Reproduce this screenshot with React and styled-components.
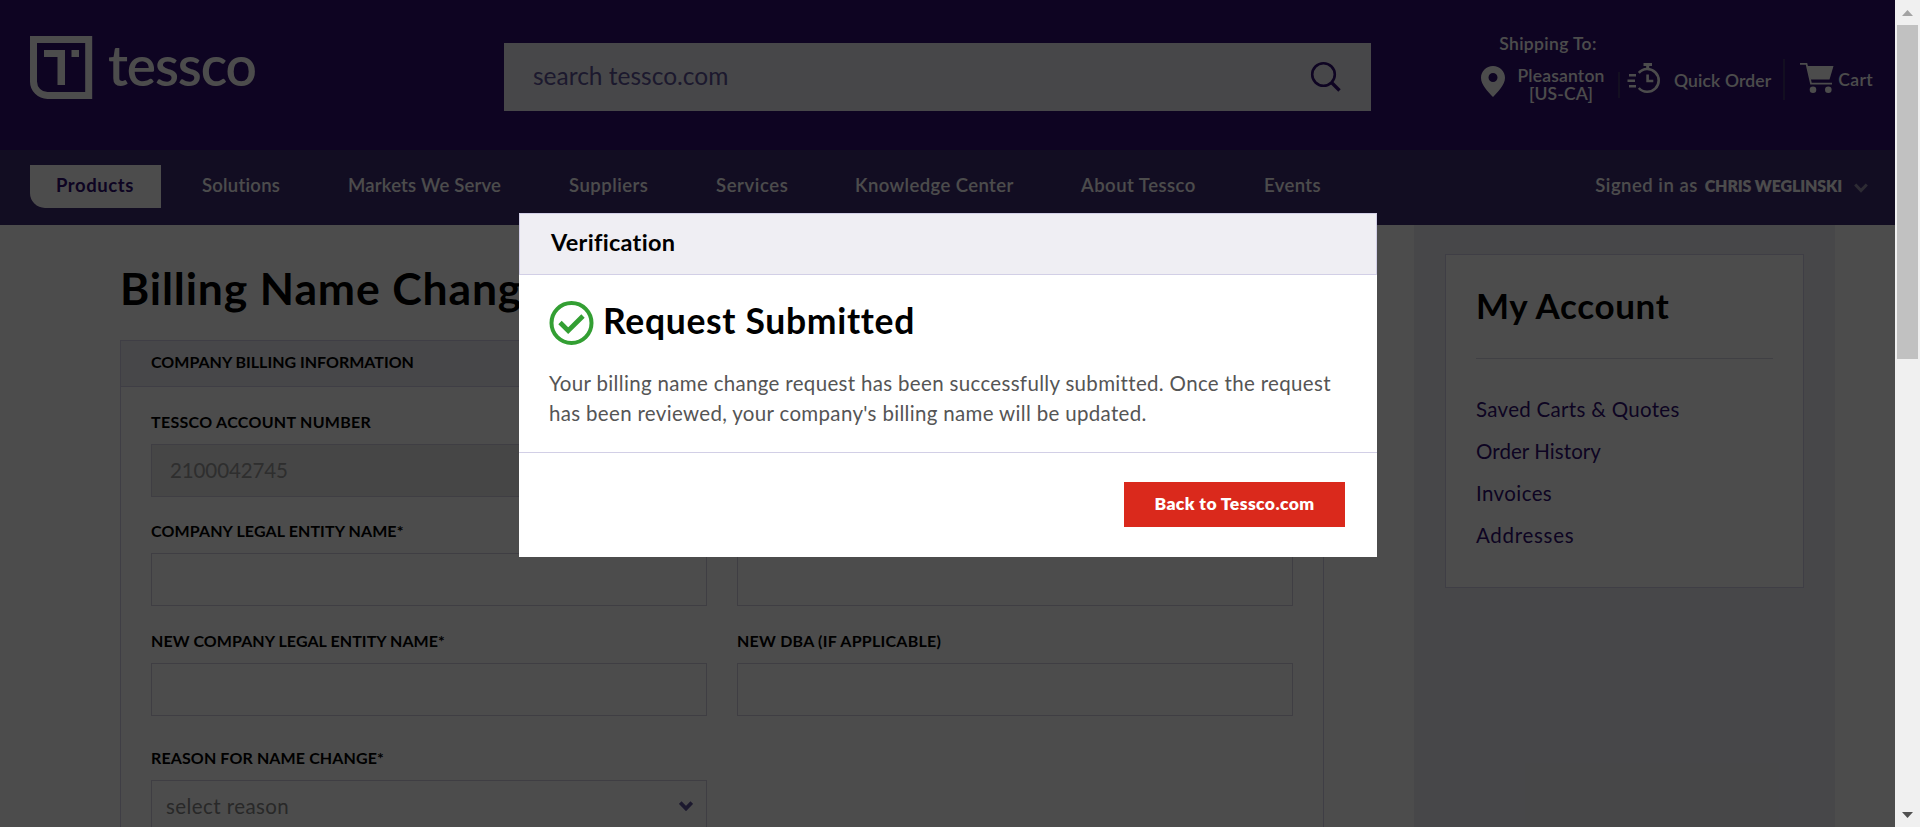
import React from "react";
import styled, { createGlobalStyle } from "styled-components";

const Global = createGlobalStyle`
  *, *::before, *::after { box-sizing: border-box; }
  html, body { margin: 0; padding: 0; overflow: hidden; background: #fff; }
  body {
    font-family: Lato, "Open Sans", sans-serif;
    font-variant-ligatures: none;
    color: #000;
  }
  h1, h2, h3, p, ul { margin: 0; padding: 0; }
`;

const Kern = styled.span`
  display: inline-block;
  white-space: nowrap;
  letter-spacing: ${(p) => p.$ls || 0}px;
`;

const Window = styled.div`
  display: flex;
  width: 1920px;
  height: 827px;
  overflow: hidden;
`;

const Page = styled.div`
  position: relative;
  display: flex;
  flex-direction: column;
  width: 1895px;
  height: 827px;
  overflow: hidden;
  background: #fff;
`;

const Header = styled.header`
  display: flex;
  align-items: flex-start;
  flex: none;
  height: 150px;
  padding-left: 30px;
  background: #2f0e72;
  color: #fff;
`;

const Logo = styled.a`
  display: flex;
  width: 474px;
  padding-top: 36px;
`;

const Wordmark = styled.span`
  margin-left: 15px;
  padding-top: 2px;
  font-size: 55px;
  font-weight: 600;
  line-height: 54px;
`;

const Search = styled.div`
  display: flex;
  align-items: center;
  justify-content: space-between;
  width: 867px;
  height: 68px;
  margin-top: 43px;
  padding: 0 29px;
  background: #efeef3;
`;

const SearchText = styled.span`
  padding-bottom: 3px;
  color: #5f559a;
  font-size: 24.5px;
`;

const Tools = styled.div`
  display: flex;
  align-items: flex-start;
  font-size: 17.5px;
  font-weight: 600;
  line-height: 18px;
`;

const ShipTo = styled.div`
  display: grid;
  grid-template-columns: 24px 88px;
  column-gap: 12px;
  margin: 35px 0 0 110px;
  text-align: center;
`;

const ShipLabel = styled.div`
  grid-column: 1 / -1;
  height: 31px;
  padding-left: 10px;
  text-align: center;
`;

const ShipCity = styled.div`
  padding-top: 1px;
`;

const Divider = styled.div`
  width: 2px;
  height: ${(p) => p.$h}px;
  margin: ${(p) => p.$top}px ${(p) => p.$right}px 0 ${(p) => p.$left}px;
  background: #40336f;
`;

const Tool = styled.div`
  display: flex;
  gap: ${(p) => p.$gap}px;
  margin-top: 63px;
`;

const ToolText = styled.span`
  padding-top: ${(p) => p.$top}px;
`;

const Nav = styled.nav`
  display: flex;
  align-items: flex-start;
  flex: none;
  height: 75px;
  padding: 15px 27px 0 30px;
  background: #3e2c74;
  color: #fff;
  font-size: 18.5px;
  font-weight: 600;
  line-height: 40px;
`;

const NavItem = styled.a`
  height: 43px;
`;

const ActiveNavItem = styled(NavItem)`
  width: 131px;
  margin-right: 41px;
  padding-left: 26px;
  border-bottom-left-radius: 15px;
  background: #fff;
  color: #2f0e72;
  font-weight: 700;
`;

const NavList = styled.div`
  display: grid;
  grid-template-columns: 146px 221px 147px 139px 226px 183px 60px;
`;

const Account = styled.div`
  display: flex;
  align-items: flex-start;
  gap: 7px;
  margin-left: auto;

  svg {
    margin: 18px 0 0 5px;
  }
`;

const UserName = styled.span`
  padding-top: 1px;
  font-size: 16px;
  font-weight: 800;
`;

const Content = styled.div`
  display: flex;
  flex: 1;
  min-height: 0;
  padding-left: 120px;
`;

const Main = styled.main`
  width: 1204px;
  margin-right: 90px;
`;

const PageTitle = styled.h1`
  height: 115px;
  padding-top: 35px;
  font-size: 44.5px;
  line-height: 56px;
  font-weight: 700;
`;

const FormCard = styled.section`
  height: 700px;
  border: 1px solid #d2cfe6;
`;

const CardHead = styled.div`
  height: 46px;
  padding: 0 30px;
  border-bottom: 1px solid #d2cfe6;
  background: #efeef3;
  font-size: 16px;
  font-weight: 700;
  line-height: 41px;
`;

const Fields = styled.div`
  display: grid;
  grid-template-columns: 556px 556px;
  grid-template-rows: 109px 110px 117px 120px;
  column-gap: 30px;
  padding: 26px 0 0 30px;
`;

const Field = styled.div`
  font-size: 16px;
  font-weight: 700;
`;

const FieldLabel = styled.label`
  display: block;
  height: 31px;
  line-height: 18px;
`;

const Input = styled.div`
  display: flex;
  align-items: center;
  justify-content: space-between;
  height: 53px;
  padding: 0 13px 2px ${(p) => (p.$disabled ? 18 : 14)}px;
  border: 1px solid #d2cfe0;
  background: ${(p) => (p.$disabled ? "#e9e9e9" : "#fff")};
  color: ${(p) => (p.$disabled ? "#999" : "#888")};
  font-size: 20.5px;
  font-weight: 400;
`;

const Side = styled.aside`
  width: 421px;
  padding: 29px 31px 0;
  background: #efeef3;
`;

const SideCard = styled.div`
  height: 334px;
  padding: 0 30px;
  border: 1px solid #d2cfe6;
  background: #fff;
`;

const SideTitle = styled.h2`
  height: 104px;
  padding-top: 29px;
  border-bottom: 1px solid #d8d6e4;
  font-size: 35px;
  font-weight: 700;
  line-height: 42px;
`;

const SideLinks = styled.ul`
  padding-top: 29px;
  list-style: none;
  color: #2f0e72;
  font-size: 20.5px;
  line-height: 42px;
`;

const Overlay = styled.div`
  position: absolute;
  inset: 0;
  background: rgba(0, 0, 0, 0.7);
`;

const Modal = styled.div`
  position: absolute;
  top: 213px;
  left: 519px;
  width: 858px;
  height: 344px;
  background: #fff;
`;

const ModalHead = styled.div`
  height: 62px;
  padding-left: 31px;
  border: 1px solid #d2cfe6;
  background: #efeef3;
  font-size: 23.5px;
  font-weight: 700;
  line-height: 57px;
`;

const ModalBody = styled.div`
  height: 178px;
  padding: 26px 30px 0;
  border-bottom: 1px solid #d2cfe6;
`;

const Heading = styled.h2`
  display: flex;
  gap: 9px;
  height: 67px;
  font-size: 35.5px;
  font-weight: 700;
  line-height: 39px;
`;

const Message = styled.p`
  color: #555;
  font-size: 20.5px;
  line-height: 30px;
`;

const ModalFoot = styled.div`
  display: flex;
  justify-content: flex-end;
  padding: 29px 32px 0 0;
`;

const Button = styled.button`
  width: 221px;
  height: 45px;
  padding: 0 0 2px;
  border: 0;
  background: #da291c;
  color: #fff;
  font-family: inherit;
  font-size: 17.5px;
  font-weight: 800;
`;

const Scrollbar = styled.div`
  display: flex;
  flex-direction: column;
  align-items: center;
  width: 25px;
  height: 827px;
  padding: 10px 0 9px;
  background: #f0f0f0;
`;

const Thumb = styled.div`
  width: 21px;
  height: 334px;
  margin: 9px 0 auto;
  background: #c1c1c1;
`;

const LogoMark = () => (
  <svg width="63" height="63" viewBox="0 0 63 63" fill="none">
    <path d="M3.5 3.5H58.7V59.5H17.5A14 14 0 0 1 3.5 45.5Z" stroke="#fff" strokeWidth="7" />
    <path d="M14 14H35V49H27.5V21H14Z" fill="#fff" />
    <path d="M41.5 14H49V21H41.5Z" fill="#fff" />
  </svg>
);

const SearchIcon = () => (
  <svg width="32" height="32" viewBox="0 0 32 32" fill="none" stroke="#2f0e72">
    <circle cx="13.5" cy="13.5" r="11.3" strokeWidth="2.6" />
    <path d="M21.5 21.5L29.5 29.5" strokeWidth="3.4" />
  </svg>
);

const PinIcon = () => (
  <svg width="24" height="32" viewBox="0 0 24 32">
    <path
      fill="#fff"
      fillRule="evenodd"
      d="M12 0C5.2 0 0 5.2 0 11.7C0 19 7 25.5 12 31C17 25.5 24 19 24 11.7C24 5.2 18.8 0 12 0ZM12 7A4.5 4.5 0 1 1 12 16A4.5 4.5 0 1 1 12 7Z"
    />
  </svg>
);

const WatchIcon = () => (
  <svg width="34" height="31" viewBox="0 0 34 31" fill="none" stroke="#fff">
    <path d="M16.5 1.6H25M20.7 1.6V6.5" strokeWidth="3" />
    <path d="M11.8 9.8A11.4 11.4 0 1 1 11.8 25" strokeWidth="2.6" />
    <path d="M20.6 11.5V18H26.3" strokeWidth="2.6" />
    <path d="M2 12.2H9M0.5 17.8H8M2 23.2H9" strokeWidth="2.4" />
  </svg>
);

const CartIcon = () => (
  <svg width="34" height="31" viewBox="0 0 34 31">
    <path d="M0 0.9H6.5L11 20.7H32" fill="none" stroke="#fff" strokeWidth="1.8" />
    <path d="M7.3 3H33.5L29.5 16.5H10.5Z" fill="#fff" />
    <circle cx="13" cy="26.7" r="3.3" fill="#fff" />
    <circle cx="28.3" cy="26.7" r="3.3" fill="#fff" />
  </svg>
);

const Chevron = ({ color, weight = 3 }) => (
  <svg width="14" height="10" viewBox="0 0 14 10" fill="none">
    <path d="M1.2 1.5L7 7.5L12.8 1.5" stroke={color} strokeWidth={weight} />
  </svg>
);

const CheckIcon = () => (
  <svg width="45" height="44" viewBox="0 0 45 44" fill="none" stroke="#339f33">
    <circle cx="22.5" cy="22" r="20" strokeWidth="4" />
    <path d="M11 21.5L19.2 29.7L34 15" strokeWidth="4.8" />
  </svg>
);

const NAV = [
  ["Solutions", 0.25],
  ["Markets We Serve", 0.2],
  ["Suppliers", 0.5],
  ["Services", 0.6],
  ["Knowledge Center", 0.4],
  ["About Tessco", 0.5],
  ["Events", 0.4],
];

const LINKS = [
  ["Saved Carts & Quotes", 0.3],
  ["Order History", 0.07],
  ["Invoices", 0.4],
  ["Addresses", 0.7],
];

export default function App() {
  return (
    <Window>
      <Global />
      <Page>
        <Header>
          <Logo>
            <LogoMark />
            <Wordmark><Kern $ls={-1.1}>tessco</Kern></Wordmark>
          </Logo>
          <Search>
            <SearchText>search tessco.com</SearchText>
            <SearchIcon />
          </Search>
          <Tools>
            <ShipTo>
              <ShipLabel><Kern $ls={0.36}>Shipping To:</Kern></ShipLabel>
              <PinIcon />
              <ShipCity>
                <Kern $ls={0.2}>Pleasanton</Kern>
                <Kern $ls={0.15}>[US-CA]</Kern>
              </ShipCity>
            </ShipTo>
            <Divider $h={26} $top={72} $left={13} $right={7} />
            <Tool $gap={13}>
              <WatchIcon />
              <ToolText $top={9}><Kern $ls={0.15}>Quick Order</Kern></ToolText>
            </Tool>
            <Divider $h={41} $top={59} $left={12} $right={15} />
            <Tool $gap={4}>
              <CartIcon />
              <ToolText $top={8}><Kern $ls={0.3}>Cart</Kern></ToolText>
            </Tool>
          </Tools>
        </Header>
        <Nav>
          <ActiveNavItem><Kern $ls={0.56}>Products</Kern></ActiveNavItem>
          <NavList>
            {NAV.map(([label, spacing]) => (
              <NavItem key={label}><Kern $ls={spacing}>{label}</Kern></NavItem>
            ))}
          </NavList>
          <Account>
            <Kern $ls={0.5}>Signed in as</Kern>
            <UserName><Kern $ls={-0.15}>CHRIS WEGLINSKI</Kern></UserName>
            <Chevron color="#9690ac" />
          </Account>
        </Nav>
        <Content>
          <Main>
            <PageTitle><Kern $ls={0.85}>Billing Name Change</Kern></PageTitle>
            <FormCard>
              <CardHead><Kern>COMPANY BILLING INFORMATION</Kern></CardHead>
              <Fields>
                <Field>
                  <FieldLabel><Kern $ls={0.3}>TESSCO ACCOUNT NUMBER</Kern></FieldLabel>
                  <Input $disabled><Kern $ls={-0.1}>2100042745</Kern></Input>
                </Field>
                <div />
                <Field>
                  <FieldLabel><Kern $ls={0.11}>COMPANY LEGAL ENTITY NAME*</Kern></FieldLabel>
                  <Input />
                </Field>
                <Field>
                  <FieldLabel />
                  <Input />
                </Field>
                <Field>
                  <FieldLabel><Kern $ls={0.07}>NEW COMPANY LEGAL ENTITY NAME*</Kern></FieldLabel>
                  <Input />
                </Field>
                <Field>
                  <FieldLabel><Kern $ls={0.25}>NEW DBA (IF APPLICABLE)</Kern></FieldLabel>
                  <Input />
                </Field>
                <Field>
                  <FieldLabel><Kern $ls={0.12}>REASON FOR NAME CHANGE*</Kern></FieldLabel>
                  <Input>
                    <Kern $ls={0.42}>select reason</Kern>
                    <Chevron color="#5f559a" weight={3.8} />
                  </Input>
                </Field>
              </Fields>
            </FormCard>
          </Main>
          <Side>
            <SideCard>
              <SideTitle><Kern $ls={0.65}>My Account</Kern></SideTitle>
              <SideLinks>
                {LINKS.map(([label, spacing]) => (
                  <li key={label}><Kern $ls={spacing}>{label}</Kern></li>
                ))}
              </SideLinks>
            </SideCard>
          </Side>
        </Content>
        <Overlay />
        <Modal>
          <ModalHead><Kern $ls={0.3}>Verification</Kern></ModalHead>
          <ModalBody>
            <Heading>
              <CheckIcon />
              <Kern $ls={0.67}>Request Submitted</Kern>
            </Heading>
            <Message>
              <Kern $ls={0.325}>Your billing name change request has been successfully submitted. Once the request</Kern>
              <Kern $ls={0.325}>has been reviewed, your company's billing name will be updated.</Kern>
            </Message>
          </ModalBody>
          <ModalFoot>
            <Button><Kern $ls={0.4}>Back to Tessco.com</Kern></Button>
          </ModalFoot>
        </Modal>
      </Page>
      <Scrollbar>
        <svg width="11" height="6" viewBox="0 0 11 6"><path d="M0 6L5.5 0L11 6Z" fill="#a3a3a3" /></svg>
        <Thumb />
        <svg width="11" height="6" viewBox="0 0 11 6"><path d="M0 0L5.5 6L11 0Z" fill="#505050" /></svg>
      </Scrollbar>
    </Window>
  );
}
